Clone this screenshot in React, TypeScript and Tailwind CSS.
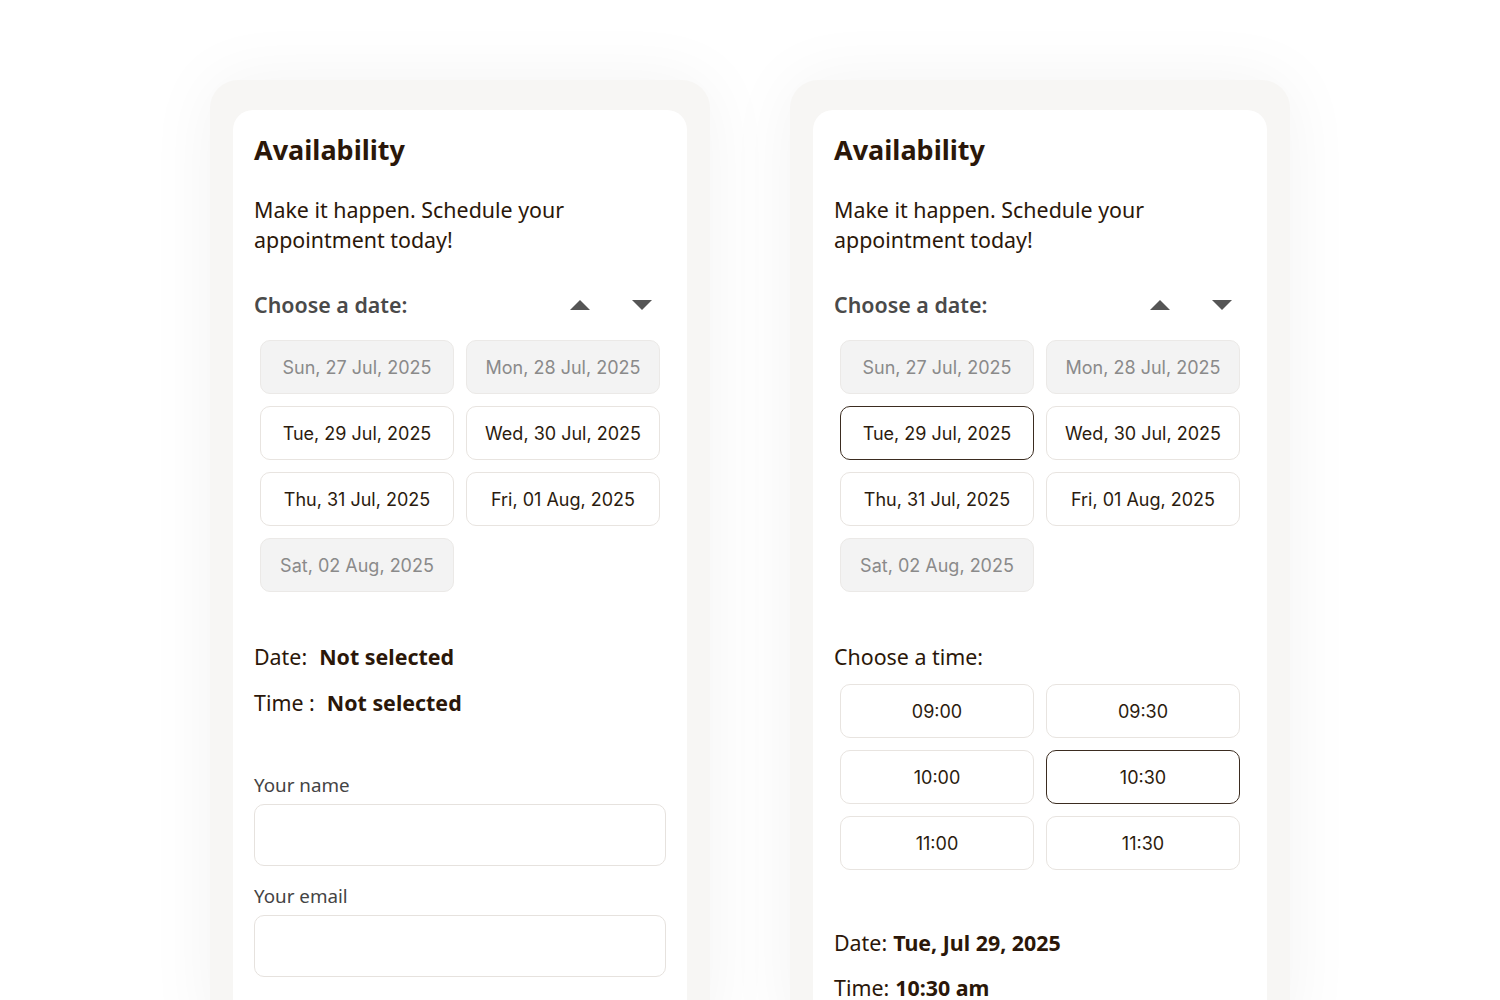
import React from 'react';

const dates = [
  { label: 'Sun, 27 Jul, 2025', disabled: true },
  { label: 'Mon, 28 Jul, 2025', disabled: true },
  { label: 'Tue, 29 Jul, 2025', disabled: false },
  { label: 'Wed, 30 Jul, 2025', disabled: false },
  { label: 'Thu, 31 Jul, 2025', disabled: false },
  { label: 'Fri, 01 Aug, 2025', disabled: false },
  { label: 'Sat, 02 Aug, 2025', disabled: true },
];

const times = ['09:00', '09:30', '10:00', '10:30', '11:00', '11:30'];

const sans = { fontFamily: '"Noto Sans", "Open Sans", sans-serif' };
const btnFont = { fontFamily: 'Inter, "Noto Sans", sans-serif' };

function Arrows() {
  return (
    <div className="flex items-center gap-[22px] pr-[4px]">
      <button className="w-10 h-8 flex items-center justify-center" aria-label="Previous">
        <svg width="20" height="10" viewBox="0 0 20 10">
          <path d="M0 10 L10 0 L20 10 Z" fill="#555555" />
        </svg>
      </button>
      <button className="w-10 h-8 flex items-center justify-center" aria-label="Next">
        <svg width="20" height="10" viewBox="0 0 20 10">
          <path d="M0 0 L20 0 L10 10 Z" fill="#555555" />
        </svg>
      </button>
    </div>
  );
}

function DateGrid({ selected }: { selected?: string }) {
  return (
    <div className="mt-[20px] px-[6px] grid grid-cols-2 gap-3" style={btnFont}>
      {dates.map((d) => {
        const isSel = d.label === selected;
        return (
          <button
            key={d.label}
            className={
              d.disabled
                ? 'h-[54px] rounded-[10px] border border-[#ebe9e7] bg-[#f3f3f3] text-[#8a8a8a] text-[18px]'
                : isSel
                ? 'h-[54px] rounded-[10px] border-[1.5px] border-[#3b2c20] bg-white text-[#2b1b0e] text-[18px]'
                : 'h-[54px] rounded-[10px] border border-[#e8e4e0] bg-white text-[#2b1b0e] text-[18px]'
            }
          >
            {d.label}
          </button>
        );
      })}
    </div>
  );
}

function Header() {
  return (
    <>
      <h2 className="text-[27px] leading-[36px] font-bold text-[#2b1709]">Availability</h2>
      <p className="mt-[27px] text-[21.4px] leading-[30px] text-[#2b1709]">
        Make it happen. Schedule your
        <br />
        appointment today!
      </p>
      <div className="mt-[35px] flex items-center justify-between h-[30px]">
        <span className="text-[21.4px] font-semibold text-[#4a4a4a]">Choose a date:</span>
        <Arrows />
      </div>
    </>
  );
}

function Frame({ children }: { children: React.ReactNode }) {
  return (
    <div className="w-[500px] h-[960px] shrink-0 rounded-[28px] bg-[#f7f6f4] px-[23px] pt-[30px] shadow-[0_0_70px_rgba(0,0,0,0.05)]">
      <div className="bg-white rounded-[20px] px-[21px] pt-[22px] h-full" style={sans}>
        {children}
      </div>
    </div>
  );
}

export default function App() {
  return (
    <div className="h-[1000px] w-full overflow-hidden bg-white flex justify-center gap-20 pt-20">
      <Frame>
        <Header />
        <DateGrid />
        <div className="mt-[50px] h-[30px] flex items-center text-[21.4px] text-[#2b1709]">
          <span>Date:</span>
          <span className="ml-[12px] font-bold">Not selected</span>
        </div>
        <div className="mt-[16px] h-[30px] flex items-center text-[21.4px] text-[#2b1709]">
          <span>Time :</span>
          <span className="ml-[12px] font-bold">Not selected</span>
        </div>
        <label className="block mt-[54px] text-[18.8px] leading-[26px] text-[#444444]">Your name</label>
        <input className="mt-[6px] block w-full h-[62px] rounded-[10px] border border-[#e6e2de] bg-white outline-none" />
        <label className="block mt-[17px] text-[18.8px] leading-[26px] text-[#444444]">Your email</label>
        <input className="mt-[6px] block w-full h-[62px] rounded-[10px] border border-[#e6e2de] bg-white outline-none" />
      </Frame>
      <Frame>
        <Header />
        <DateGrid selected="Tue, 29 Jul, 2025" />
        <div className="mt-[50px] h-[30px] flex items-center text-[21.4px] text-[#2b1709]">Choose a time:</div>
        <div className="mt-[12px] px-[6px] grid grid-cols-2 gap-3" style={btnFont}>
          {times.map((t) => (
            <button
              key={t}
              className={
                t === '10:30'
                  ? 'h-[54px] rounded-[10px] border-[1.5px] border-[#3b2c20] bg-white text-[#2b1b0e] text-[18px]'
                  : 'h-[54px] rounded-[10px] border border-[#e8e4e0] bg-white text-[#2b1b0e] text-[18px]'
              }
            >
              {t}
            </button>
          ))}
        </div>
        <div className="mt-[58px] h-[30px] flex items-center text-[21.4px] text-[#2b1709]">
          <span>Date:</span>
          <span className="ml-[6px] font-bold">Tue, Jul 29, 2025</span>
        </div>
        <div className="mt-[15px] h-[30px] flex items-center text-[21.4px] text-[#2b1709]">
          <span>Time:</span>
          <span className="ml-[6px] font-bold">10:30 am</span>
        </div>
      </Frame>
    </div>
  );
}
